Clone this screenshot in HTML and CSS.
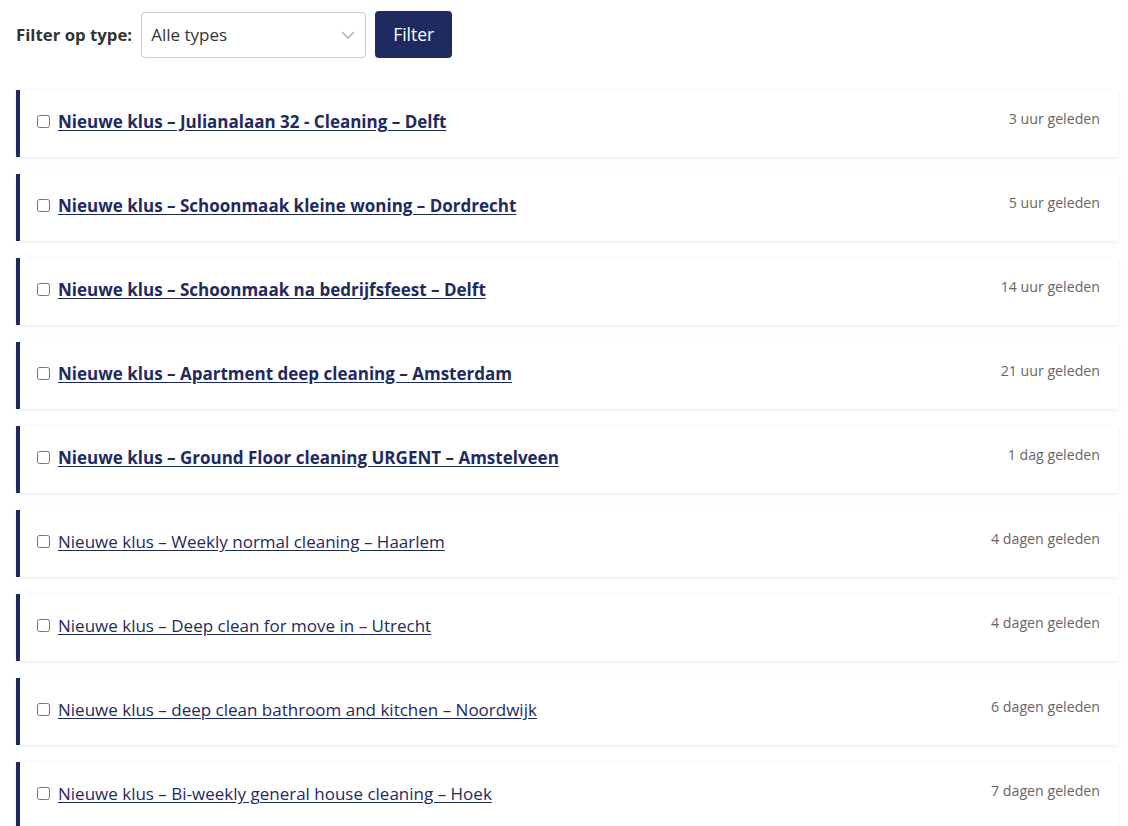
FILE: index.html
```html
<!DOCTYPE html>
<html>
<head>
    <title>Klussen</title>
    <link rel="stylesheet" href="styles.css">
</head>

<body>
    <form class="filter-bar">
        <label for="type" class="filter-label">Filter op type:</label>
        <div class="select-wrap">
            <select id="type" class="filter-select">
                <option>Alle types</option>
            </select>
            <svg class="select-arrow" width="14" height="8" viewBox="0 0 14 8"><path d="M1 1l6 6 6-6" fill="none" stroke="#b3b3b3" stroke-width="1.5"/></svg>
        </div>
        <button type="submit" class="btn-filter">Filter</button>
    </form>

    <ul class="job-list">
        <li class="job unread">
            <input type="checkbox">
            <a href="#" class="job-title">Nieuwe klus – Julianalaan 32 - Cleaning – Delft</a>
            <span class="job-time">3 uur geleden</span>
        </li>
        <li class="job unread">
            <input type="checkbox">
            <a href="#" class="job-title">Nieuwe klus – Schoonmaak kleine woning – Dordrecht</a>
            <span class="job-time">5 uur geleden</span>
        </li>
        <li class="job unread">
            <input type="checkbox">
            <a href="#" class="job-title">Nieuwe klus – Schoonmaak na bedrijfsfeest – Delft</a>
            <span class="job-time">14 uur geleden</span>
        </li>
        <li class="job unread">
            <input type="checkbox">
            <a href="#" class="job-title">Nieuwe klus – Apartment deep cleaning – Amsterdam</a>
            <span class="job-time">21 uur geleden</span>
        </li>
        <li class="job unread">
            <input type="checkbox">
            <a href="#" class="job-title">Nieuwe klus – Ground Floor cleaning URGENT – Amstelveen</a>
            <span class="job-time">1 dag geleden</span>
        </li>
        <li class="job">
            <input type="checkbox">
            <a href="#" class="job-title">Nieuwe klus – Weekly normal cleaning – Haarlem</a>
            <span class="job-time">4 dagen geleden</span>
        </li>
        <li class="job">
            <input type="checkbox">
            <a href="#" class="job-title">Nieuwe klus – Deep clean for move in – Utrecht</a>
            <span class="job-time">4 dagen geleden</span>
        </li>
        <li class="job">
            <input type="checkbox">
            <a href="#" class="job-title">Nieuwe klus – deep clean bathroom and kitchen – Noordwijk</a>
            <span class="job-time">6 dagen geleden</span>
        </li>
        <li class="job">
            <input type="checkbox">
            <a href="#" class="job-title">Nieuwe klus – Bi-weekly general house cleaning – Hoek</a>
            <span class="job-time">7 dagen geleden</span>
        </li>
    </ul>
</body>
</html>
```

FILE: styles.css
```css
/* General Styles */
body {
    font-family: "Open Sans", sans-serif;
    margin: 0;
    padding: 11px 10px 0 16px;
    background-color: #fff;
    color: #333;
}

/* Filter bar */
.filter-bar {
    display: flex;
    align-items: center;
    gap: 9px;
    margin-bottom: 32px;
}

.filter-label {
    font-size: 16.8px;
    font-weight: bold;
    color: #333;
}

.select-wrap {
    position: relative;
}

.filter-select {
    width: 225px;
    height: 46px;
    padding: 0 30px 0 9px;
    font-family: "Open Sans", sans-serif;
    font-size: 17px;
    color: #333;
    background: #fff;
    border: 1px solid #ccc;
    border-radius: 4px;
    appearance: none;
    -webkit-appearance: none;
}

.select-arrow {
    position: absolute;
    right: 11px;
    top: 19px;
    pointer-events: none;
}

.btn-filter {
    height: 47px;
    padding: 0 18px 2px;
    font-family: "Open Sans", sans-serif;
    font-size: 17.5px;
    color: #fff;
    background-color: #1f2a60;
    border: none;
    border-radius: 4px;
    cursor: pointer;
}

/* Job list */
.job-list {
    list-style: none;
    margin: 0;
    padding: 0;
    display: flex;
    flex-direction: column;
    gap: 17px;
}

.job {
    display: flex;
    align-items: flex-start;
    height: 67px;
    box-sizing: border-box;
    padding: 20px 18px 0 14px;
    background: #fff;
    border-left: 4px solid #1f2a60;
    box-shadow: 0 1px 4px rgba(0, 0, 0, 0.09);
}

.job input[type="checkbox"] {
    width: 13px;
    height: 13px;
    margin: 5px 8px 0 3px;
}

.job-title {
    font-size: 17px;
    line-height: 24px;
    color: #1f2a60;
    text-decoration: underline;
    text-underline-offset: 2px;
}

.job.unread .job-title {
    font-weight: bold;
}

.job-time {
    margin-left: auto;
    margin-top: -1px;
    font-size: 14.2px;
    line-height: 20px;
    color: #666;
}
```
